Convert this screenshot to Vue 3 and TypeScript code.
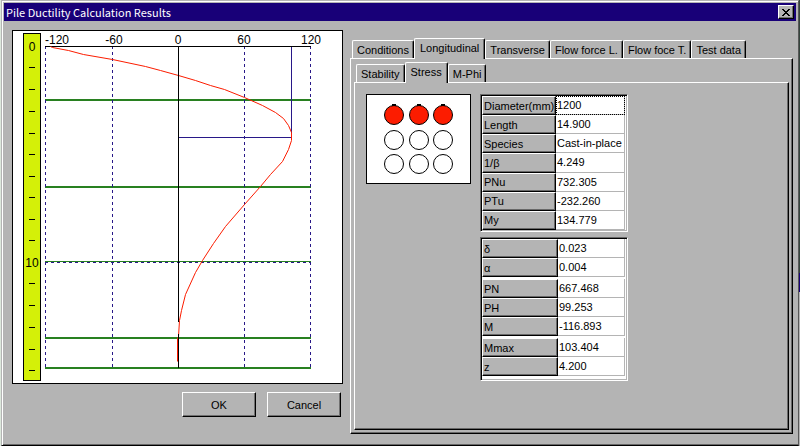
<script setup lang="ts">
import { ref } from 'vue'

interface Row {
  label: string
  value: string
}

const sections = ['Conditions', 'Longitudinal', 'Transverse', 'Flow force L.', 'Flow foce T.', 'Test data']
const views = ['Stability', 'Stress', 'M-Phi']
const section = ref('Longitudinal')
const view = ref('Stress')

const properties: Row[] = [
  { label: 'Diameter(mm)', value: '1200' },
  { label: 'Length', value: '14.900' },
  { label: 'Species', value: 'Cast-in-place' },
  { label: '1/β', value: '4.249' },
  { label: 'PNu', value: '732.305' },
  { label: 'PTu', value: '-232.260' },
  { label: 'My', value: '134.779' },
]
const selected = ref('Diameter(mm)')

const results: Row[][] = [
  [
    { label: 'δ', value: '0.023' },
    { label: 'α', value: '0.004' },
  ],
  [
    { label: 'PN', value: '667.468' },
    { label: 'PH', value: '99.253' },
    { label: 'M', value: '-116.893' },
  ],
  [
    { label: 'Mmax', value: '103.404' },
    { label: 'z', value: '4.200' },
  ],
]

const axis = [
  { text: '-120', x: 45 },
  { text: '-60', x: 102 },
  { text: '0', x: 166 },
  { text: '60', x: 232 },
  { text: '120', x: 299 },
]
const gridX = [33, 100, 232, 298]
const layers = [69, 156, 307, 337]
const ticks = [37, 59, 81, 103, 124, 146, 167, 189, 210, 253, 275, 297, 319, 340]
const moment =
  '38,16 40,17 56,20 71,24 100,29 133,36 148,40 166,45 183,50 198,55 212,59 232,67 250,75 263,82 271,88 276,95 279,102 279,110 276,119 270,131 258,144 248,156 232,174 213,196 201,213 190,230 183,242 173,264 169,280 167,290 166,306 165,308 165,331'

const pileColumns = [28, 53, 77]
const pileRows = [21, 46, 70]
</script>

<template>
  <div class="desktop">
    <main class="window">
      <header class="title-bar">
        <h1>Pile Ductility Calculation Results</h1>
        <button type="button" class="close" aria-label="Close">
          <svg width="8" height="7" viewBox="0 0 8 7" shape-rendering="crispEdges">
            <path d="M0 0h2v1h1v1h2V1h1V0h2v1H7v1H6v1H5v1h1v1h1v1h1v1H6V6H5V5H3v1H2v1H0V6h1V5h1V4h1V3H2V2H1V1H0z" />
          </svg>
        </button>
      </header>

      <div class="content">
        <section class="left">
          <svg class="chart" width="331" height="354" viewBox="0 0 331 354" role="img" aria-label="Bending moment by depth">
            <rect class="sheet" x="0.5" y="0.5" width="330" height="353" />
            <rect class="ruler" x="11.5" y="3.5" width="17" height="347" />
            <path v-for="y in ticks" :key="y" class="black" :d="`M17 ${y + 0.5}h6`" />
            <text x="20" y="21">0</text>
            <text x="20" y="237">10</text>
            <text v-for="a in axis" :key="a.text" :x="a.x" y="14">{{ a.text }}</text>
            <path v-for="y in layers" :key="y" class="layer" :d="`M33 ${y + 1}h266`" />
            <path class="level" d="M33 231.5h266" />
            <path class="grid" d="M33 232.5h266" />
            <path v-for="x in gridX" :key="x" class="grid" :d="`M${x + 0.5} 16v323`" />
            <path class="black" d="M33 16.5h266" />
            <path class="peak" d="M279.5 17v91M167 107.5h112" />
            <polyline class="moment" :points="moment" transform="translate(0.5 0.5)" />
            <path class="black" d="M166.5 16v276M166.5 304v34" />
          </svg>
          <div class="actions">
            <button type="button" class="push">OK</button>
            <button type="button" class="push">Cancel</button>
          </div>
        </section>

        <section class="right">
          <div class="tabs" role="tablist" aria-label="Results">
            <button
              v-for="s in sections"
              :key="s"
              type="button"
              role="tab"
              class="tab"
              :class="{ active: s === section }"
              :aria-selected="s === section"
              @click="section = s"
            >{{ s }}</button>
          </div>
          <div class="panel outer" role="tabpanel">
            <div class="tabs" role="tablist" aria-label="Direction results">
              <button
                v-for="v in views"
                :key="v"
                type="button"
                role="tab"
                class="tab"
                :class="{ active: v === view }"
                :aria-selected="v === view"
                @click="view = v"
              >{{ v }}</button>
            </div>
            <div class="panel inner" role="tabpanel">
              <svg class="piles" width="105" height="90" viewBox="0 0 105 90" role="img" aria-label="Pile layout">
                <rect class="sheet" x="0.5" y="0.5" width="104" height="89" />
                <template v-for="(y, r) in pileRows" :key="y">
                  <g v-for="x in pileColumns" :key="x">
                    <circle class="pile" :class="{ critical: r === 0 }" :cx="x" :cy="y" r="9.5" />
                    <rect v-if="r === 0" :x="x - 2" :y="y - 11" width="4" height="2" />
                  </g>
                </template>
              </svg>
              <div class="tables">
                <table class="first">
                  <tbody>
                    <tr v-for="p in properties" :key="p.label">
                      <th scope="row">{{ p.label }}</th>
                      <td :class="{ focused: p.label === selected }" @click="selected = p.label">{{ p.value }}</td>
                    </tr>
                  </tbody>
                </table>
                <table class="second">
                  <tbody v-for="(group, i) in results" :key="i">
                    <tr v-for="p in group" :key="p.label">
                      <th scope="row">{{ p.label }}</th>
                      <td>{{ p.value }}</td>
                    </tr>
                  </tbody>
                </table>
              </div>
            </div>
          </div>
        </section>
      </div>
    </main>
  </div>
</template>

<style>
body {
  margin: 0;
  background: #b4b4b4;
}
</style>

<style scoped>
* {
  box-sizing: border-box;
}

.desktop {
  display: flex;
  min-height: 100vh;
  padding: 0 1px;
  background: linear-gradient(#34443c 0 273px, #180078 273px 292px, #b4b4b4 292px) right / 1px 100% no-repeat #dce8dc;
  font-family: 'Liberation Sans', Arial, sans-serif;
  font-size: 11px;
  line-height: 16px;
  color: #000;
}

.window {
  flex: 1;
  display: flex;
  flex-direction: column;
  min-width: 0;
  padding: 1px 2px 11px 1px;
  background: #b4b4b4;
  border: 1px solid #b4b4b4;
  border-right-color: #585858;
  border-bottom-color: #000;
  box-shadow: inset 1px 1px #fff, inset 0 -1px #686868;
}

.title-bar {
  display: flex;
  align-items: center;
  justify-content: space-between;
  height: 18px;
  margin-top: 1px;
  margin-left: 1px;
  padding: 0 2px;
  background: #180078;
  color: #fff;
}

h1 {
  margin: 0;
  font-family: 'Noto Sans CJK JP', 'Liberation Sans', sans-serif;
  font-size: 11px;
  font-weight: 400;
  line-height: 18px;
}

button {
  font: inherit;
  color: inherit;
  background: #b4b4b4;
}

.close {
  display: flex;
  align-items: center;
  justify-content: center;
  width: 16px;
  height: 14px;
  padding: 0;
  border: 1px solid;
  border-color: #fff #000 #000 #fff;
  box-shadow: inset -1px -1px #707070;
}

.content {
  flex: 1;
  display: flex;
  gap: 7px;
  padding: 9px 3px 0 9px;
}

.left {
  flex: none;
}

.chart,
.piles {
  display: block;
  flex: none;
}

.chart text {
  text-anchor: middle;
  font-size: 12px;
}

.sheet {
  fill: #fff;
  stroke: #000;
}

.ruler {
  fill: #d4f008;
  stroke: #000;
}

.black {
  stroke: #000;
}

.layer {
  stroke: #288020;
  stroke-width: 2;
}

.level {
  stroke: #288020;
}

.grid {
  stroke: #281888;
  stroke-dasharray: 3 3;
}

.peak {
  fill: none;
  stroke: #281888;
}

.moment {
  fill: none;
  stroke: #fc1c00;
}

.actions {
  display: flex;
  justify-content: flex-end;
  gap: 11px;
  padding: 8px 2px 0 0;
}

.push {
  width: 74px;
  height: 25px;
  padding: 0;
  border: 1px solid;
  border-color: #fff #000 #000 #fff;
  box-shadow: inset -1px -1px #707070;
}

.right {
  flex: 1;
  display: flex;
  flex-direction: column;
  min-width: 0;
  padding-top: 8px;
}

.tabs {
  display: flex;
  align-items: flex-end;
  height: 20px;
  padding-left: 2px;
}

.tab {
  height: 18px;
  padding: 1px 4px 0;
  border: 1px solid;
  border-color: #fff #000 #fff #fff;
  border-bottom: 0;
  border-radius: 2px 2px 0 0;
  box-shadow: inset -1px 0 #686868;
  line-height: 16px;
  white-space: nowrap;
}

.tab.active {
  position: relative;
  height: 21px;
  margin-bottom: -1px;
  padding: 0 5px 3px;
}

.panel {
  flex: 1;
  border: 1px solid;
  border-color: #fff #000 #000 #fff;
  box-shadow: inset -1px -1px #686868;
}

.outer {
  display: flex;
  flex-direction: column;
  padding: 3px;
}

.inner {
  display: flex;
  align-items: flex-start;
  gap: 9px;
  padding: 11px;
}

.pile {
  fill: #fff;
  stroke: #000;
}

.pile.critical {
  fill: #fc1c00;
}

.tables {
  display: flex;
  flex-direction: column;
  gap: 5px;
}

table {
  table-layout: fixed;
  width: 148px;
  border-spacing: 0;
  padding: 1px 2px 1px 1px;
  background: #fff;
  border: 1px solid;
  border-color: #686868 #fff #fff #686868;
  box-shadow: inset 1px 1px #000, inset -1px -1px #b4b4b4;
}

.first {
  height: 138px;
}

.second {
  padding-bottom: 4px;
}

th,
td {
  height: 19px;
  padding: 0 1px;
  font-weight: 400;
  text-align: left;
  line-height: 16px;
  white-space: nowrap;
}

th {
  width: 74px;
  padding: 0 0 0 1px;
  background: #b4b4b4;
  border: 1px solid;
  border-color: #fff #000 #000 #fff;
  box-shadow: inset -1px -1px #686868;
}

.second th {
  width: 76px;
}

td {
  border-right: 1px solid #b4b4b4;
  border-bottom: 1px solid #b4b4b4;
}

.focused {
  outline: 1px dotted #000;
  outline-offset: -1px;
}

.second tbody + tbody::before {
  content: '';
  display: block;
  height: 2px;
}
</style>
